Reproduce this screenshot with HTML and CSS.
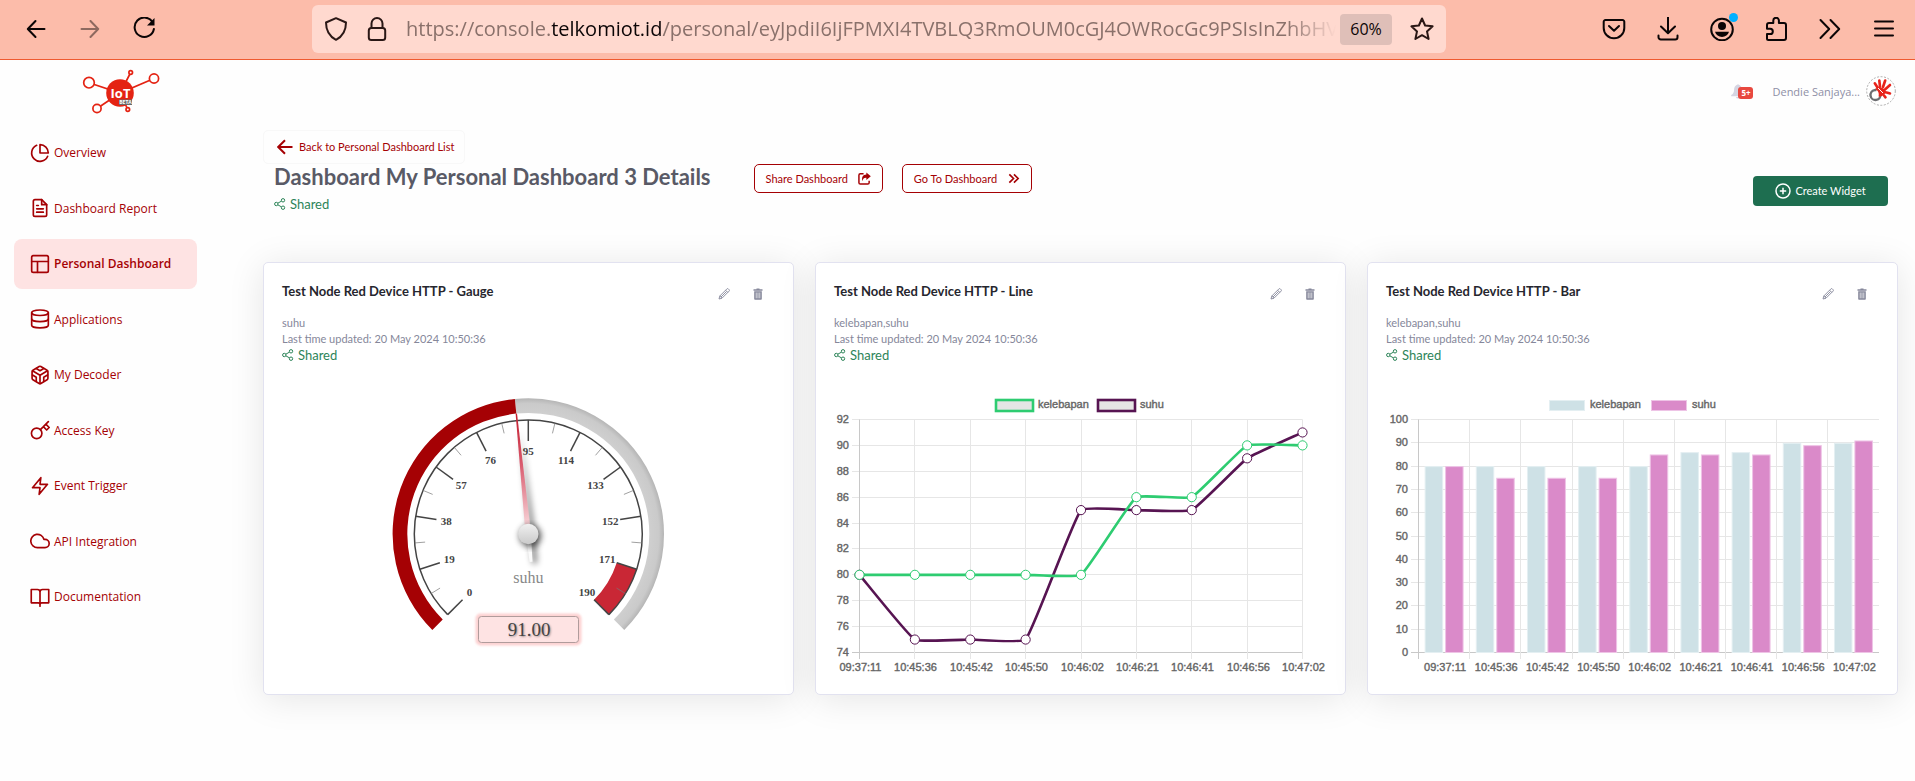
FILE: index.html
```html
<!DOCTYPE html>
<html lang="en">
<head>
<meta charset="utf-8">
<title>Dashboard My Personal Dashboard 3 Details</title>
<link rel="stylesheet" href="styles.css">
</head>
<body>
<svg class="defs" aria-hidden="true">
  <symbol id="share" viewBox="0 0 12 12"><g fill="none" stroke="currentColor"><circle cx="9" cy="2.3" r="1.7"/><circle cx="2.3" cy="6" r="1.7"/><circle cx="9" cy="9.7" r="1.7"/><path d="M3.8 5.2 7.5 3.1M3.8 6.8 7.5 8.9"/></g></symbol>
  <symbol id="pencil" viewBox="0 0 12 12"><path d="M1 11l.8-3L8.900 .9a1 1 0 0 1 1.400 0l.8.8a1 1 0 0 1 0 1.400L4 10.200zM7.600 2.200l2.200 2.200M1.800 8 4 10.200M8.500 3.500 3 9" fill="none" stroke="currentColor" stroke-width=".9"/></symbol>
  <symbol id="trash" viewBox="0 0 12 12"><path d="M1.500 1.300h3V.5h3v.8h3v1.400h-9zM2.200 3.200h7.600V11a.8.8 0 0 1-.8.800H3a.8.8 0 0 1-.8-.8z" fill="currentColor"/><path d="M4.200 4.500v5.800M6 4.500v5.800M7.800 4.500v5.800" stroke="#fff" stroke-width=".7"/></symbol>
</svg>

<header class="browser">
  <button class="tool" aria-label="Back"><svg viewBox="0 0 24 24"><path d="M20.500 12H4M11.500 4 3.800 12l7.700 8"/></svg></button>
  <button class="tool dim" aria-label="Forward"><svg viewBox="0 0 24 24"><path d="M3.500 12H20M12.500 4l7.700 8-7.700 8"/></svg></button>
  <button class="tool" aria-label="Reload"><svg viewBox="0 0 24 24"><path d="M20.800 5.500A9.700 9.700 0 1 0 21.900 12"/><path d="M22.500 1v7.500H15z" fill="currentColor" stroke="none"/></svg></button>
  <div class="address">
    <svg class="glyph" viewBox="0 0 24 24"><path d="M12 1.200 22 5.500c0 8-3 13.700-10 17.300C5 19.200 2 13.500 2 5.500z"/></svg>
    <svg class="glyph" viewBox="0 0 24 24"><path d="M6.500 11V6.500a5.500 5.500 0 0 1 11 0V11"/><rect x="3.800" y="11" width="16.400" height="12" rx="2.500"/></svg>
    <div class="url" role="textbox" aria-label="Address">https://console.<b>telkomiot.id</b>/personal/eyJpdiI6IjFPMXI4TVBLQ3RmOUM0cGJ4OWRocGc9PSIsInZhbHV</div>
    <button class="zoom">60%</button>
    <button class="tool star" aria-label="Bookmark"><svg viewBox="0 0 24 24"><path d="M12 1.500l3.100 7 7.500.8-5.600 5.100 1.600 7.600L12 18.200 5.400 22 7 14.400 1.400 9.300l7.500-.8z"/></svg></button>
  </div>
  <button class="tool" aria-label="Pocket"><svg viewBox="0 0 24 24"><path d="M3.500 3h17A1.800 1.800 0 0 1 22.300 5v6a10.300 10.300 0 0 1-20.600 0V5A1.800 1.800 0 0 1 3.500 3zM7 9l5 4.800L17 9"/></svg></button>
  <button class="tool" aria-label="Downloads"><svg viewBox="0 0 24 24"><path d="M12 0v16M5 9.500l7 6.800 7-6.800M2.500 18.500v1.700A2.300 2.300 0 0 0 4.800 22.500h14.400a2.300 2.300 0 0 0 2.300-2.300v-1.700"/></svg></button>
  <button class="tool account" aria-label="Account"><svg viewBox="0 0 24 24"><circle cx="12" cy="12.500" r="10.800"/><g fill="currentColor" stroke="none"><circle cx="12" cy="9" r="4"/><path d="M5 14.800h14c-1 3.200-3.700 5.200-7 5.200s-6-2-7-5.200z"/></g></svg></button>
  <button class="tool" aria-label="Extensions"><svg viewBox="0 0 24 24"><path d="M4.500 23A1.500 1.500 0 0 1 3 21.500V17h3.200a2.600 2.600 0 0 0 0-5.200H3V8a2 2 0 0 1 2-2h4.300V3.600a2.800 2.800 0 0 1 5.600 0V6H20a2 2 0 0 1 2 2v13a2 2 0 0 1-2 2z"/></svg></button>
  <button class="tool" aria-label="More tools"><svg viewBox="0 0 24 24"><path d="M2.500 3l8.700 9-8.700 9M12.500 3l8.700 9-8.700 9"/></svg></button>
  <button class="tool" aria-label="Menu"><svg viewBox="0 0 24 24"><path d="M3 4.500h18M3 11.500h18M3 18.500h18"/></svg></button>
</header>

<div class="app">
  <aside class="sidebar">
    <a class="logo" href="#" aria-label="IoT">
      <svg viewBox="82 68 78 47" width="78" height="47">
        <g stroke="#e42313" stroke-width="1.700" fill="#fff">
          <path d="M89 82.700 120 93 154 78.500M97 108.500 120 93M130.700 72.500 120 93l7.800 16.500"/>
          <circle cx="89" cy="82.700" r="5.300"/><circle cx="154" cy="78.500" r="4.600"/><circle cx="97" cy="108.500" r="4.100"/><circle cx="130.700" cy="72.500" r="1.800"/><circle cx="127.800" cy="109.500" r="1.800"/>
        </g>
        <circle cx="120" cy="93" r="13.800" fill="#e42313"/>
        <text x="120.500" y="98" class="logo-name">IoT</text>
        <rect x="119" y="99.500" width="13" height="5.500" fill="#6b6b6b"/>
        <text x="125.500" y="104" class="logo-beta">BETA</text>
      </svg>
    </a>
    <nav class="nav">
      <a href="#"><svg viewBox="0 0 24 24"><path d="M21.200 15.900A10 10 0 1 1 8 2.800"/><path d="M22 12A10 10 0 0 0 12 2v10z"/></svg>Overview</a>
      <a href="#"><svg viewBox="0 0 24 24"><path d="M14 2H6a2 2 0 0 0-2 2v16a2 2 0 0 0 2 2h12a2 2 0 0 0 2-2V8z"/><path d="M14 2v6h6M16 13H8M16 17H8M10 9H8"/></svg>Dashboard Report</a>
      <a href="#" class="active"><svg viewBox="0 0 24 24"><rect x="2" y="2" width="20" height="20" rx="2"/><path d="M2 9h20M9 22V9"/></svg>Personal Dashboard</a>
      <a href="#"><svg viewBox="0 0 24 24"><ellipse cx="12" cy="4.500" rx="10" ry="3.300"/><path d="M22 12c0 1.700-4 3.200-10 3.200S2 13.700 2 12"/><path d="M2 4.500v15c0 1.700 4 3.200 10 3.200s10-1.500 10-3.200v-15"/></svg>Applications</a>
      <a href="#"><svg viewBox="0 0 24 24"><path d="M21.500 16V8a2 2 0 0 0-1-1.700l-7.500-4.500a2 2 0 0 0-2 0L3.500 6.300a2 2 0 0 0-1 1.700v8a2 2 0 0 0 1 1.700l7.500 4.500a2 2 0 0 0 2 0l7.500-4.500a2 2 0 0 0 1-1.700z"/><path d="M7.500 4.200 12 6.800l4.500-2.600M7.500 19.800v-5.200L3 12M21 12l-4.500 2.600v5.200M3 7l9 5.200L21 7M12 22.100V12"/></svg>My Decoder</a>
      <a href="#"><svg viewBox="0 0 24 24"><circle cx="8" cy="16" r="6.300"/><path d="M12.500 11.500 22 2M16 8l4 4 3-3-4-4"/></svg>Access Key</a>
      <a href="#"><svg viewBox="0 0 24 24"><path d="M13 2 3 14h9l-1 8 10-12h-9z"/></svg>Event Trigger</a>
      <a href="#"><svg viewBox="0 0 24 24"><path d="M18 10h-1.300A8 8 0 1 0 9 20h9a5 5 0 0 0 0-10z"/></svg>API Integration</a>
      <a href="#"><svg viewBox="0 0 24 24"><path d="M1.500 3H9a3 3 0 0 1 3 3v15a2 2 0 0 0-2-2H1.500zM22.500 3H15a3 3 0 0 0-3 3v15a2 2 0 0 1 2-2h8.500zM12 19v4"/></svg>Documentation</a>
    </nav>
  </aside>

  <main class="main">
    <div class="userbar">
      <button class="bell" aria-label="Notifications"><svg viewBox="0 0 20 20"><path d="M10 1.500c3.600 1 5 4 5 7.500 0 3 1 4.500 3.500 6v1.500h-17V15C4 13.500 5 12 5 9c0-3.500 1.400-6.500 5-7.500zM7.500 17.500h5a2.500 2 0 0 1-5 0z" fill="#d5d5e2"/></svg><span class="count">5+</span></button>
      <span class="user">Dendie Sanjaya...</span>
      <svg class="avatar" viewBox="0 0 30 30"><circle cx="15" cy="15" r="14.300" fill="#fff" stroke="#999" stroke-width=".8" stroke-dasharray="2 1.500"/><circle cx="9.500" cy="19" r="5" fill="none" stroke="#6d6e71" stroke-width="2.400" stroke-dasharray="25 6.400" transform="rotate(-10 9.500 19)"/><g fill="none" stroke="#e8231a" stroke-linecap="round" stroke-width="2.600"><path d="M11.500 11.500 8.800 7.300M14 10.500 13.300 4.500M17 11l2.200-6.500M19 13.500l5-4.500M17.500 16.500c2.500-.8 4.500.5 6.500 1M18 19.500l1.500 1.800"/></g><path d="M9 13c3 1.500 4.500 4 3.500 7.500 3 .5 5.500-1.500 7-4 1-3-4.500-6-7-5.500z" fill="#e8231a"/><path d="M12 12l5 5" stroke="#fff" stroke-width="1"/></svg>
    </div>

    <div class="page-head">
      <div class="intro">
        <a class="back" href="#"><svg viewBox="0 0 16 16"><path d="M15.500 8H1.500M8 1.200 1.200 8 8 14.800"/></svg>Back to Personal Dashboard List</a>
        <div class="title-row">
          <h1>Dashboard My Personal Dashboard 3 Details</h1>
          <button class="outline">Share Dashboard<svg viewBox="0 0 14 14"><path d="M6 2H2.500A1.500 1.500 0 0 0 1 3.500v8A1.500 1.500 0 0 0 2.500 13h8a1.500 1.500 0 0 0 1.500-1.500V9.500" fill="none" stroke="currentColor" stroke-width="1.600"/><path d="M9 .5 13.800 4.500 9 8.500V6.200C6.500 6 5.300 7.200 4.800 10 3.600 6 5 2.800 9 2.800z" fill="currentColor"/></svg></button>
          <button class="outline">Go To Dashboard<svg viewBox="0 0 14 14"><path d="M2.500 2.500 7 7l-4.500 4.500M7.500 2.500 12 7l-4.500 4.500" fill="none" stroke="currentColor" stroke-width="1.800"/></svg></button>
        </div>
        <p class="shared"><svg><use href="#share"/></svg>Shared</p>
      </div>
      <button class="create"><svg viewBox="0 0 16 16"><circle cx="8" cy="8" r="7"/><path d="M8 4.800v6.400M4.800 8h6.400"/></svg>Create Widget</button>
    </div>

    <div class="cards">
      <section class="card">
        <header>
          <h2>Test Node Red Device HTTP - Gauge</h2>
          <button class="edit" aria-label="Edit"><svg><use href="#pencil"/></svg></button>
          <button class="edit" aria-label="Delete"><svg><use href="#trash"/></svg></button>
        </header>
        <div class="meta"><p>suhu</p><p>Last time updated: 20 May 2024 10:50:36</p><p class="shared"><svg><use href="#share"/></svg>Shared</p></div>
        <svg class="chart" id="gauge" viewBox="264 372 529 323" role="img" aria-label="Gauge of suhu"></svg>
      </section>
      <section class="card">
        <header>
          <h2>Test Node Red Device HTTP - Line</h2>
          <button class="edit" aria-label="Edit"><svg><use href="#pencil"/></svg></button>
          <button class="edit" aria-label="Delete"><svg><use href="#trash"/></svg></button>
        </header>
        <div class="meta"><p>kelebapan,suhu</p><p>Last time updated: 20 May 2024 10:50:36</p><p class="shared"><svg><use href="#share"/></svg>Shared</p></div>
        <svg class="chart" id="line" viewBox="816 372 529 323" role="img" aria-label="Line chart"></svg>
      </section>
      <section class="card">
        <header>
          <h2>Test Node Red Device HTTP - Bar</h2>
          <button class="edit" aria-label="Edit"><svg><use href="#pencil"/></svg></button>
          <button class="edit" aria-label="Delete"><svg><use href="#trash"/></svg></button>
        </header>
        <div class="meta"><p>kelebapan,suhu</p><p>Last time updated: 20 May 2024 10:50:36</p><p class="shared"><svg><use href="#share"/></svg>Shared</p></div>
        <svg class="chart" id="bar" viewBox="1368 372 529 323" role="img" aria-label="Bar chart"></svg>
      </section>
    </div>
  </main>
</div>
<script src="charts.js"></script>
</body>
</html>
```
FILE: styles.css
```css
* { box-sizing: border-box; }
body { margin: 0; min-height: 100vh; background: #fefefe; font-family: "Open Sans", "Noto Sans", sans-serif; font-size: 12px; color: #595a66; }
button { font: inherit; color: inherit; background: none; border: 0; padding: 0; }
a { color: inherit; text-decoration: none; }
p, h1, h2 { margin: 0; }
svg { display: block; flex: none; }
.defs { position: absolute; width: 0; height: 0; }

.browser { display: flex; align-items: center; gap: 30px; height: 60px; padding: 0 19px 1px 24px; background: #fcbcaa; border-bottom: 1px solid #ef5a30; color: #0b0506; }
.tool svg, .glyph { width: 24px; height: 24px; fill: none; stroke: currentColor; stroke-width: 2; stroke-linejoin: round; stroke-linecap: round; }
.dim { opacity: .45; }
.address { flex: 1; min-width: 0; display: flex; align-items: center; height: 48px; margin: 0 126px; padding: 0 12px; background: #ffd9cf; border-radius: 6px; }
.glyph { color: #2a1715; margin-right: 17px; }
.url { flex: 1; min-width: 0; margin-right: 4px; overflow: hidden; white-space: nowrap; font-size: 20px; line-height: 30px; color: #8a716b; -webkit-mask-image: linear-gradient(to left, transparent, #000 50px); mask-image: linear-gradient(to left, transparent, #000 50px); }
.url b { font-weight: 400; color: #0b0506; }
.zoom { width: 52px; height: 31px; margin-right: 18px; border-radius: 4px; background: #dfbfb8; font-size: 16px; }
.star { color: #2a1715; }
.account { position: relative; }
.account::after { content: ""; position: absolute; top: -4px; right: -4px; width: 9px; height: 9px; border-radius: 50%; background: #00b0ff; }

.app { display: grid; grid-template-columns: 263px 1fr; padding-bottom: 48px; }
.sidebar { padding: 8px 66px 0 14px; }
.logo { display: flex; margin-left: 68px; }
.logo-name { font: bold 13px "Open Sans", sans-serif; fill: #fff; text-anchor: middle; }
.logo-beta { font: bold 5px "Open Sans", sans-serif; fill: #fff; text-anchor: middle; }
.nav { display: flex; flex-direction: column; justify-content: space-between; min-height: 494px; margin-top: 13px; }
.nav a { display: flex; align-items: center; gap: 4px; height: 50px; padding: 0 0 1px 16px; border-radius: 8px; color: #a50104; font-size: 12px; white-space: nowrap; }
.nav a.active { background: #fee3e3; font-weight: 600; }
.nav svg { width: 20px; height: 20px; fill: none; stroke: currentColor; stroke-width: 2; stroke-linejoin: round; stroke-linecap: round; }

.main { padding-right: 17px; min-width: 0; }
.userbar { display: flex; align-items: center; justify-content: flex-end; height: 70px; padding: 0 2px 8px 0; color: #8e8fa6; }
.bell { position: relative; width: 24px; height: 20px; margin-right: 18px; }
.bell svg { width: 16px; height: 16px; }
.count { position: absolute; left: 8px; top: 6px; width: 15px; height: 12px; border-radius: 3px; background: #e8483f; color: #fff; font-size: 8px; font-weight: 700; line-height: 12px; text-align: center; }
.user { margin-right: 6px; font-size: 11px; }
.avatar { width: 30px; height: 30px; }

.page-head { display: flex; justify-content: space-between; align-items: flex-start; padding-right: 10px; height: 132px; }
.back { display: inline-flex; align-items: center; gap: 6px; height: 34px; padding: 0 10px 0 13px; border: 1px solid #f8f8f8; border-radius: 5px; color: #a50104; font: 11px/16px Lato, sans-serif; }
.back svg { width: 16px; height: 16px; fill: none; stroke: currentColor; stroke-width: 2; }
.title-row { display: flex; align-items: flex-start; padding-left: 11px; }
h1 { margin-right: 43px; font: bold 22px/26px Lato, sans-serif; color: #595a66; }
.outline { display: flex; align-items: center; gap: 10px; height: 29px; margin-right: 19px; padding: 0 11px; border: 1px solid #a50104; border-radius: 5px; background: #fff; color: #a50104; font: 11px/16px Lato, sans-serif; }
.outline svg { width: 13px; height: 13px; }
.shared { display: flex; align-items: center; gap: 4px; color: #2c8458; font: 13px/18px Lato, sans-serif; }
.shared svg { width: 12px; height: 12px; }
.intro > .shared { padding: 2px 0 0 11px; }
.create { display: flex; align-items: center; justify-content: center; gap: 4px; width: 135px; height: 30px; margin-top: 46px; border-radius: 4px; background: #1e6e50; color: #fff; font: 11px/16px Lato, sans-serif; }
.create svg { width: 16px; height: 16px; fill: none; stroke: currentColor; stroke-width: 1.500; }

.cards { display: grid; grid-template-columns: repeat(3, minmax(0, 1fr)); gap: 21px; }
.card { background: #fff; border: 1px solid #e2e2f0; border-radius: 5px; box-shadow: 0 4px 36px rgba(0, 0, 0, .1); }
.card header { display: flex; padding: 18px 29px 0 18px; }
h2 { flex: 1; font: bold 13px/20px Lato, sans-serif; color: #26262e; }
.edit { margin: 6px 0 0 22px; color: #85879a; }
.edit svg { width: 12px; height: 12px; }
.meta { padding: 14px 18px 8px; color: #85879a; font: 11px/16px Lato, sans-serif; }
.meta .shared { line-height: 16px; }
.chart { width: 100%; height: auto; }
.axis { font: 11px "Liberation Sans", Arial, sans-serif; fill: #666; stroke: #666; stroke-width: .4; }
.mid { text-anchor: middle; }
.end { text-anchor: end; }
.num { font: bold 11px "Liberation Serif", serif; fill: #444; text-anchor: middle; }
.unit { font: 16px "Liberation Serif", serif; fill: #888; text-anchor: middle; }
.value { font: 19px "Liberation Serif", serif; fill: #444; text-anchor: middle; text-shadow: 1px 1px 2px rgba(0, 0, 0, .35); }
```
FILE: charts.js
```js
const times = ['09:37:11', '10:45:36', '10:45:42', '10:45:50', '10:46:02', '10:46:21', '10:46:41', '10:46:56', '10:47:02'];
const kelebapan = [80, 80, 80, 80, 80, 86, 86, 90, 90];
const suhu = [80, 75, 75, 75, 85, 85, 85, 89, 91];
const top_ = 420.5, bottom = 653.5;
const rule = (x1, y1, x2, y2, c = '#e6e6e6', w = 1) => `<path d="M${x1} ${y1}L${x2} ${y2}" stroke="${c}" stroke-width="${w}"/>`;
const text = (x, y, s, c) => `<text x="${x}" y="${y}" class="${c}">${s}</text>`;
const snap = v => Math.floor(v) + 0.5;

function spline(p, t) {
  const c = p.map((q, i) => {
    const a = p[i - 1] || q, b = p[i + 1] || q;
    const d1 = Math.hypot(q[0] - a[0], q[1] - a[1]), d2 = Math.hypot(b[0] - q[0], b[1] - q[1]);
    const k1 = t * d1 / (d1 + d2), k2 = t * d2 / (d1 + d2), dx = b[0] - a[0], dy = b[1] - a[1];
    return [q[0] - k1 * dx, q[1] - k1 * dy, q[0] + k2 * dx, q[1] + k2 * dy];
  });
  return p.map((q, i) => i ? `C${c[i - 1][2]} ${c[i - 1][3]} ${c[i][0]} ${c[i][1]} ${q[0]} ${q[1]}` : `M${q[0]} ${q[1]}`).join('');
}

function drawLine() {
  const left = 859.5, right = 1302.5, step = (right - left) / 8;
  const y = v => bottom - (v - 74) * (bottom - top_) / 18;
  let s = '';
  for (let v = 74; v <= 92; v += 2) {
    s += rule(852, snap(y(v)), right, snap(y(v)), v === 74 ? '#c8c8c8' : undefined) + text(849, y(v) + 3.5, v, 'axis end');
  }
  times.forEach((t, i) => {
    const x = snap(left + i * step);
    s += rule(x, top_, x, 660, i ? undefined : '#c8c8c8') + text(x + 1, 672, t, 'axis mid');
  });
  for (const [data, color] of [[suhu, '#571452'], [kelebapan, '#2ecc71']]) {
    const p = data.map((v, i) => [left + i * step, y(v)]);
    s += `<path d="${spline(p, 0.1)}" fill="none" stroke="${color}" stroke-width="2.6"/>`;
    s += p.map(q => `<circle cx="${q[0]}" cy="${q[1]}" r="4.600" fill="#fff" stroke="${color}" stroke-width="1"/>`).join('');
  }
  s += `<rect x="996" y="401" width="37" height="11" fill="#e5e5e5" stroke="#2ecc71" stroke-width="2.6"/><rect x="1098" y="401" width="37" height="11" fill="#e5e5e5" stroke="#571452" stroke-width="2.6"/>`;
  s += text(1038, 409, 'kelebapan', 'axis') + text(1140, 409, 'suhu', 'axis');
  document.getElementById('line').innerHTML = s;
}

function drawBars() {
  const left = 1418.5, right = 1879, step = (right - left) / 9;
  const y = v => bottom - v * (bottom - top_) / 100;
  let s = '';
  for (let v = 0; v <= 100; v += 10) {
    s += rule(1411, snap(y(v)), right, snap(y(v)), v ? undefined : '#c8c8c8') + text(1408, y(v) + 3.5, v, 'axis end');
  }
  times.forEach((t, i) => {
    const x = snap(left + i * step);
    s += rule(x, top_, x, 660, i ? undefined : '#c8c8c8') + text(left + (i + 0.5) * step + 1, 672, t, 'axis mid');
  });
  const bar = (x, v, fill, edge) => `<rect x="${x + 0.5}" y="${y(v) + 0.5}" width="17.500" height="${bottom - y(v) - 0.5}" fill="${fill}" stroke="${edge}"/>`;
  times.forEach((t, i) => {
    const x = left + i * step + step * 0.1 + 1;
    s += bar(x, kelebapan[i], '#cee1e6', '#e4eff2') + bar(x + step * 0.4, suhu[i], '#da8ac9', '#eec4e6');
  });
  s += `<rect x="1549.500" y="401.500" width="35" height="10" fill="#cee1e6" stroke="#e4eff2"/><rect x="1651.500" y="401.500" width="35" height="10" fill="#da8ac9" stroke="#eec4e6"/>`;
  s += text(1590, 409, 'kelebapan', 'axis') + text(1692, 409, 'suhu', 'axis');
  document.getElementById('bar').innerHTML = s;
}

function drawGauge() {
  const cx = 528.3, cy = 535, max = 190, value = 91;
  const at = (v, r) => {
    const a = (v / max * 270 - 135) * Math.PI / 180;
    return [cx + r * Math.sin(a), cy - r * Math.cos(a)];
  };
  const arc = (a, b, r1, r2) => {
    const big = (b - a) / max * 270 > 180 ? 1 : 0;
    return `M${at(a, r1)}A${r1} ${r1} 0 ${big} 1 ${at(b, r1)}L${at(b, r2)}A${r2} ${r2} 0 ${big} 0 ${at(a, r2)}Z`;
  };
  let s = `<defs>
    <radialGradient id="ring" gradientUnits="userSpaceOnUse" cx="${cx}" cy="${cy}" r="136"><stop offset=".89" stop-color="#cfcfcf"/><stop offset=".96" stop-color="#cacaca"/><stop offset="1" stop-color="#b4b4b4"/></radialGradient>
    <linearGradient id="needle" gradientUnits="userSpaceOnUse" x1="0" y1="-121" x2="0" y2="0"><stop offset="0" stop-color="#c41f30"/><stop offset=".4" stop-color="#d8566a"/><stop offset="1" stop-color="#fbe4e6"/></linearGradient>
    <linearGradient id="knob" x2="0" y2="1"><stop stop-color="#f0f0f0"/><stop offset="1" stop-color="#cacaca"/></linearGradient>
    <filter id="blur" x="-200%" y="-20%" width="500%" height="140%"><feGaussianBlur stdDeviation="3"/></filter>
    <filter id="glow" x="-20%" y="-40%" width="140%" height="180%"><feGaussianBlur stdDeviation="1"/></filter></defs>`;
  s += `<path d="${arc(value, max, 135.7, 121)}" fill="url(#ring)"/><path d="${arc(0, value, 135.7, 121)}" fill="#a50104"/>`;
  s += `<path d="${arc(171, 190, 114, 93)}" fill="#c92735"/>`;
  s += `<path d="M${at(0, 114)}A114 114 0 1 1 ${at(max, 114)}" fill="none" stroke="#444" stroke-width="1.500"/>`;
  for (let i = 0; i <= 10; i++) {
    s += rule(...at(i * 19, 93), ...at(i * 19, 114), '#444', 1.5);
    if (i < 10) s += rule(...at(i * 19 + 9.5, 103.5), ...at(i * 19 + 9.5, 114), '#777', 0.7);
    const [x, y] = at(i * 19, 83);
    s += text(x, y + 3.7, i * 19, 'num');
  }
  s += text(cx, 584, 'suhu', 'unit');
  s += `<g transform="translate(${cx} ${cy}) rotate(${value / max * 270 - 135})">
    <path d="M2 -105 L7 0 L6 30 L1 30 L1 0Z" fill="#000" opacity=".5" filter="url(#blur)"/>
    <path d="M-.7 -121 L.7 -121 L2.800 0 L-2.800 0Z" fill="url(#needle)"/><path d="M-2.500 0 L2.500 0 L1.500 28 L-1.500 28Z" fill="#fafafa"/></g>`;
  s += `<circle cx="${cx + 2}" cy="${cy + 2}" r="11" opacity=".6" filter="url(#blur)"/><circle cx="${cx}" cy="${cy}" r="10.200" fill="url(#knob)"/>`;
  s += `<rect x="475.500" y="614.500" width="106" height="32" rx="5" fill="#fdd2d2" filter="url(#glow)"/><rect x="478.500" y="617.500" width="100" height="26" rx="3" fill="#fee3e3" stroke="#b09c9c"/>`;
  s += text(cx + 0.7, 637, '91.00', 'value');
  document.getElementById('gauge').innerHTML = s;
}

drawGauge();
drawLine();
drawBars();
```
